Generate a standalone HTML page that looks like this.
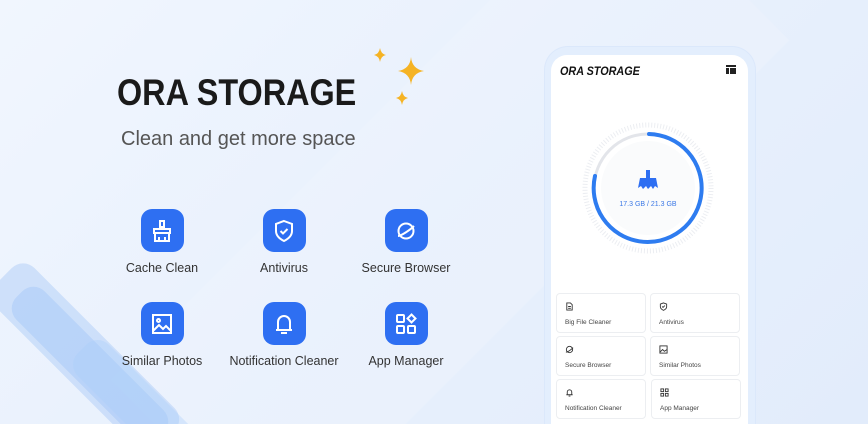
<!DOCTYPE html>
<html><head><meta charset="utf-8"><style>
*{margin:0;padding:0;box-sizing:border-box}
html,body{width:868px;height:424px;overflow:hidden}
body{font-family:"Liberation Sans",Arial,sans-serif;position:relative;background:linear-gradient(135deg,#f1f6fe 0%,#e9f1fd 45%,#e2ecfb 100%)}
.wrap{position:absolute;left:0;top:0;width:868px;height:424px;overflow:hidden}
.band{position:absolute;left:330px;top:-150px;width:240px;height:720px;background:rgba(255,255,255,0.12);transform:rotate(45deg)}
.deco{position:absolute;border-radius:16px;transform:rotate(45deg)}
h1{position:absolute;left:117px;top:72px;font-size:37px;font-weight:700;color:#1a1a1a;transform:scaleX(0.875);transform-origin:0 0;white-space:nowrap}
.sub{position:absolute;left:121px;top:128px;font-size:20px;color:#555}
.f{position:absolute;width:140px;text-align:center;font-size:12.5px;color:#333}
.f .ic{width:43px;height:43px;border-radius:11px;background:#2e6ff2;margin:0 auto 9px;display:flex;align-items:center;justify-content:center}
.phone{position:absolute;left:544px;top:46px;width:212px;height:378px;border-radius:24px 24px 0 0;background:#e3eefd;border:1px solid #dbe8fb;border-bottom:none}
.screen{position:absolute;left:551px;top:55px;width:197px;height:369px;border-radius:16px 16px 0 0;background:#fff}
.card{position:absolute;width:90px;height:40px;border:1px solid #eceef1;border-radius:4px;font-size:6.5px;color:#444}
.card svg{position:absolute;left:8px;top:8px}
.card span{position:absolute;left:8px;top:25px}
</style></head><body><div class="wrap">
<div class="band"></div>
<div class="deco" style="left:-30px;top:330px;width:230px;height:55px;background:rgba(160,195,245,0.4)"></div>
<div class="deco" style="left:-10px;top:345px;width:200px;height:40px;background:rgba(150,190,245,0.35)"></div>
<div class="deco" style="left:60px;top:380px;width:150px;height:44px;background:rgba(170,205,250,0.35)"></div>
<h1>ORA STORAGE</h1>
<div class="sub">Clean and get more space</div>
<svg style="position:absolute;left:370px;top:45px" width="60" height="65" viewBox="0 0 60 65">
<path fill="#f5b324" d="M10 3Q11 9 16 10Q11 11 10 17Q9 11 4 10Q9 9 10 3Z"/>
<path fill="#f5b324" d="M41 12Q42 24 54 26Q42 28 41 40Q40 28 28 26Q40 24 41 12Z"/>
<path fill="#f5b324" d="M32 46Q33 52 38 53Q33 54 32 60Q31 54 26 53Q31 52 32 46Z"/>
</svg>

<div class="f" style="left:92px;top:209px"><div class="ic"><svg width="24" height="24" viewBox="0 0 24 24" fill="none" stroke="#fff" stroke-width="2"><path d="M10 2h4v6h-4z M4 10h16v4H4z M5 14v8h14v-8 M9 18v4 M15 18v4"/></svg></div>Cache Clean</div>
<div class="f" style="left:214px;top:209px"><div class="ic"><svg width="24" height="24" viewBox="0 0 24 24" fill="none" stroke="#fff" stroke-width="2"><path d="M12 2l8 3v7c0 5-4 8-8 10-4-2-8-5-8-10V5z"/><path d="M8.5 12l2.5 2.5 4.5-4.5"/></svg></div>Antivirus</div>
<div class="f" style="left:336px;top:209px"><div class="ic"><svg width="24" height="24" viewBox="0 0 24 24" fill="none" stroke="#fff" stroke-width="2"><circle cx="12" cy="12" r="7.5"/><path d="M4 17c3 0 12-6 16-10"/></svg></div>Secure Browser</div>
<div class="f" style="left:92px;top:302px"><div class="ic"><svg width="24" height="24" viewBox="0 0 24 24" fill="none" stroke="#fff" stroke-width="2"><rect x="3" y="3" width="18" height="18"/><circle cx="8.5" cy="8.5" r="1.5"/><path d="M3 19l6-6 4 4 3-3 5 5"/></svg></div>Similar Photos</div>
<div class="f" style="left:214px;top:302px"><div class="ic"><svg width="24" height="24" viewBox="0 0 24 24" fill="none" stroke="#fff" stroke-width="2"><path d="M6 18V10a6 6 0 0 1 12 0v8z M4 18h16 M9 21h6"/></svg></div>Notification Cleaner</div>
<div class="f" style="left:336px;top:302px"><div class="ic"><svg width="24" height="24" viewBox="0 0 24 24" fill="none" stroke="#fff" stroke-width="2"><rect x="3" y="3" width="7" height="7" rx="1"/><rect x="3" y="14" width="7" height="7" rx="1"/><rect x="14" y="14" width="7" height="7" rx="1"/><path d="M17.5 2.5l4 4-4 4-4-4z"/></svg></div>App Manager</div>

<div class="phone"></div>
<div class="screen"></div>
<div style="position:absolute;left:560px;top:64px;font-size:12px;font-weight:700;font-style:italic;color:#111;transform:scaleX(0.9);transform-origin:0 0;white-space:nowrap">ORA STORAGE</div>
<svg style="position:absolute;left:726px;top:65px" width="10" height="9"><rect x="0" y="0" width="10" height="2" fill="#222"/><rect x="0" y="3" width="3" height="6" fill="#222"/><rect x="4" y="3" width="6" height="6" fill="#222"/></svg>
<svg style="position:absolute;left:578px;top:118px" width="140" height="140" viewBox="0 0 140 140">
<circle cx="70" cy="70" r="63" fill="none" stroke="#eceef2" stroke-width="5" stroke-dasharray="1 2"/>
<circle cx="70" cy="70" r="47" fill="#fafbfc"/>
<circle cx="70" cy="70" r="54" fill="none" stroke="#e3e5ea" stroke-width="3"/>
<path d="M71 16 A54 54 0 1 1 17 58" fill="none" stroke="#2e7cf0" stroke-width="4" stroke-linecap="round"/>
<path fill="#2e6ff2" d="M68 52h4v8h-4z M62 60h16l2 10 -3 -2 -2 3 -2 -3 -3 3 -2 -3 -3 3 -2 -3 -3 2z"/>
<text x="70" y="88" text-anchor="middle" font-size="7" fill="#3b78e6" font-family="Liberation Sans">17.3 GB / 21.3 GB</text>
</svg>

<div class="card" style="left:556px;top:293px"><svg width="9" height="9" viewBox="0 0 10 10" fill="none" stroke="#333"><path d="M2 1h4l2 2v6H2z M3.5 5h3 M3.5 7h3"/></svg><span>Big File Cleaner</span></div>
<div class="card" style="left:650px;top:293px"><svg width="9" height="9" viewBox="0 0 10 10" fill="none" stroke="#333"><path d="M5 1l3.5 1.3v3c0 2-2 3.3-3.5 4-1.5-.7-3.5-2-3.5-4v-3z M3.5 5l1 1 2-2"/></svg><span>Antivirus</span></div>
<div class="card" style="left:556px;top:336px"><svg width="9" height="9" viewBox="0 0 10 10" fill="none" stroke="#333"><circle cx="5" cy="5" r="3.5"/><path d="M1 8c2 0 6-3 8-5"/></svg><span>Secure Browser</span></div>
<div class="card" style="left:650px;top:336px"><svg width="9" height="9" viewBox="0 0 10 10" fill="none" stroke="#333"><rect x="1" y="1" width="8" height="8"/><path d="M1 8l3-3 2 2 3-2"/></svg><span>Similar Photos</span></div>
<div class="card" style="left:556px;top:379px"><svg width="9" height="9" viewBox="0 0 10 10" fill="none" stroke="#333"><path d="M2.5 7.5V4.5a2.5 2.5 0 0 1 5 0v3z M1.5 7.5h7 M4 9h2"/></svg><span>Notification Cleaner</span></div>
<div class="card" style="left:651px;top:379px"><svg width="9" height="9" viewBox="0 0 10 10" fill="none" stroke="#333"><rect x="1" y="1" width="3" height="3"/><rect x="6" y="1" width="3" height="3"/><rect x="1" y="6" width="3" height="3"/><rect x="6" y="6" width="3" height="3"/></svg><span>App Manager</span></div>
</div></body></html>
